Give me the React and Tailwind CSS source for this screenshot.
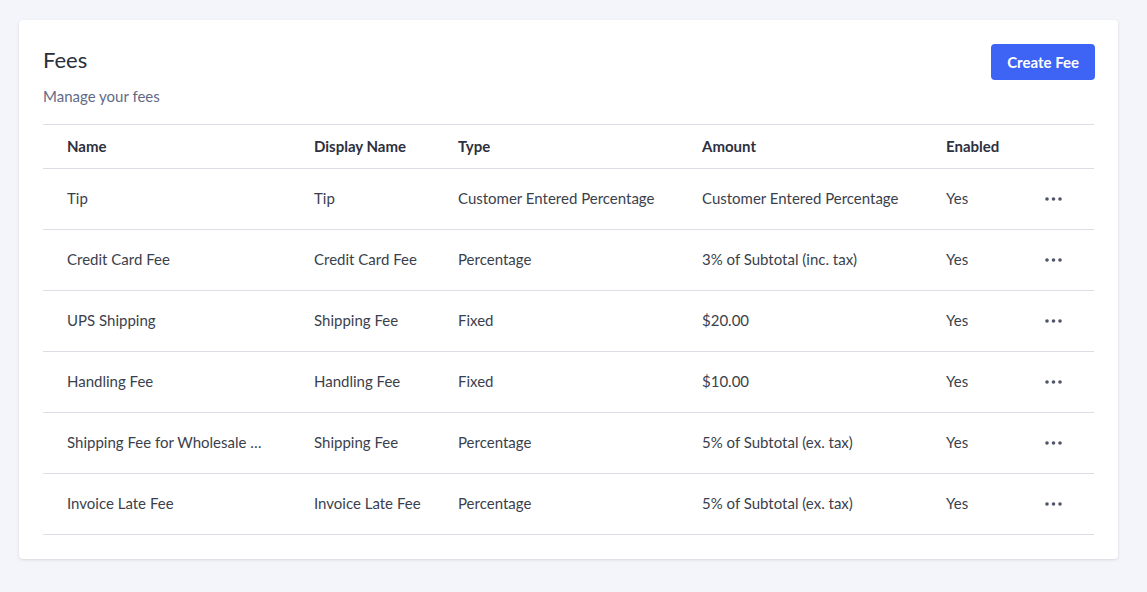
const rows = [
  ["Tip","Tip","Customer Entered Percentage","Customer Entered Percentage"],
  ["Credit Card Fee","Credit Card Fee","Percentage","3% of Subtotal (inc. tax)"],
  ["UPS Shipping","Shipping Fee","Fixed","$20.00"],
  ["Handling Fee","Handling Fee","Fixed","$10.00"],
  ["Shipping Fee for Wholesale Orders","Shipping Fee","Percentage","5% of Subtotal (ex. tax)"],
  ["Invoice Late Fee","Invoice Late Fee","Percentage","5% of Subtotal (ex. tax)"],
];
const cols = "grid grid-cols-[247px_144px_244px_244px_90px_1fr] items-center";
export default function App() {
  return (
    <div className="min-h-[592px] bg-[#f4f5fa] pt-5 pl-[19px] pr-[29px]" style={{fontFamily:"Lato, 'Noto Sans', sans-serif"}}>
      <div className="bg-white rounded shadow-[0_1px_3px_rgba(0,0,0,0.12)] px-6 pt-6 pb-6">
        <div className="flex justify-between items-start">
          <div>
            <h1 className="text-[22px] leading-[30px] text-[#2b2f3a] mt-[1px]">Fees</h1>
            <p className="text-[15px] text-[#626a86] mt-[10px]">Manage your fees</p>
          </div>
          <button className="bg-[#3d64f5] text-white font-bold text-[15px] rounded h-9 px-4 -mr-px">Create Fee</button>
        </div>
        <div className="mt-[16px] border-t border-[#dcdde8] text-[15px]">
          <div className={cols + " h-[44px] border-b border-[#dcdde8] font-bold text-[#2d3040] pl-6"}>
            <div>Name</div><div>Display Name</div><div>Type</div><div>Amount</div><div>Enabled</div><div></div>
          </div>
          {rows.map((r,i)=>(
            <div key={i} className={cols + " h-[61px] border-b border-[#dcdde8] text-[#3b3f4c] pl-6"}>
              <div className="truncate max-w-[202px]">{r[0]}</div>
              <div>{r[1]}</div><div>{r[2]}</div><div>{r[3]}</div><div>Yes</div>
              <div className="flex pl-[9px]">
                <svg width="17" height="4" viewBox="0 0 17 4" fill="#4f5468"><circle cx="2" cy="2" r="1.8"/><circle cx="8.5" cy="2" r="1.8"/><circle cx="15" cy="2" r="1.8"/></svg>
              </div>
            </div>
          ))}
        </div>
      </div>
    </div>
  );
}
